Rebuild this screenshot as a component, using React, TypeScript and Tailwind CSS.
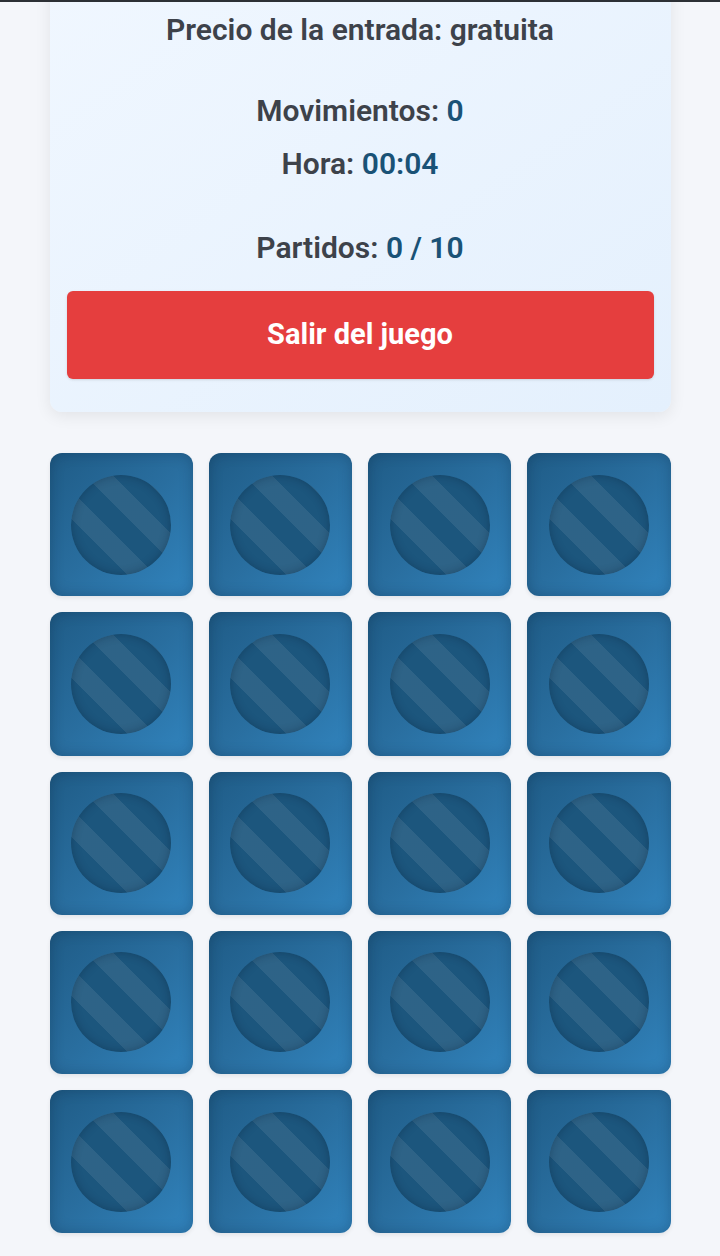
import { FC } from 'react'

const Stat: FC<{ label: string; value?: string; className?: string }> = ({
  label,
  value,
  className,
}) => (
  <p className={`text-center text-[30px] leading-[36px] font-semibold ${className ?? ''}`}>
    {label}
    {value && <span className="text-[#1a5276]"> {value}</span>}
  </p>
)

const Tile: FC = () => (
  <div className="aspect-square rounded-xl bg-gradient-to-br from-[#1f5c87] via-[#296e9f] to-[#3184be] shadow-[inset_0_0_14px_rgba(0,20,40,0.25),0_2px_4px_rgba(0,0,0,0.08)] flex items-center justify-center">
    <div className="w-[100px] h-[100px] rounded-full bg-[#1c567d] bg-[repeating-linear-gradient(45deg,rgba(255,255,255,0.08)_0px,rgba(255,255,255,0.08)_20px,rgba(255,255,255,0)_20px,rgba(255,255,255,0)_40px)] shadow-[inset_0_0_10px_rgba(0,20,40,0.3)]" />
  </div>
)

export default function App() {
  const tiles = Array.from({ length: 20 }, (_, i) => i)
  return (
    <div className="min-h-screen bg-[#f4f6fa] font-['Roboto','Liberation_Sans',sans-serif] text-[#3d424a] overflow-hidden">
      <div className="fixed top-0 inset-x-0 h-[2px] bg-[#2c3035]" />
      <div className="w-[621px] mx-auto">
        <div className="-mt-5 pt-8 pb-[33px] px-[17px] rounded-xl bg-gradient-to-br from-[#f0f7ff] to-[#e4f0fd] shadow-[0_4px_16px_rgba(0,0,0,0.08)]">
          <Stat label="Precio de la entrada: gratuita" />
          <Stat label="Movimientos:" value="0" className="mt-[45px]" />
          <Stat label="Hora:" value="00:04" className="mt-[17px]" />
          <Stat label="Partidos:" value="0 / 10" className="mt-[48px]" />
          <button className="mt-[25px] w-full h-[88px] rounded-md bg-[#e53e3e] text-white text-[29px] font-bold shadow-sm">
            Salir del juego
          </button>
        </div>
        <div className="mt-[41px] grid grid-cols-4 gap-4">
          {tiles.map(i => (
            <Tile key={i} />
          ))}
        </div>
      </div>
    </div>
  )
}
